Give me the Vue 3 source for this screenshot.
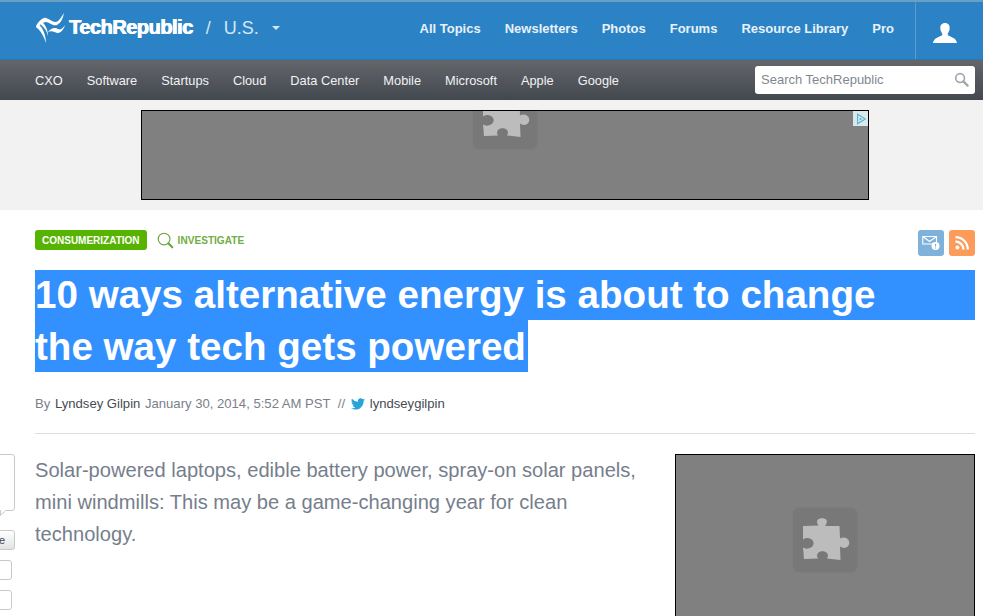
<template>
  <div class="page">
    <!-- top blue bar -->
    <header class="top-bar">
      <div class="brand">
        <svg class="logo-mark" viewBox="0 0 34 32" width="34" height="32">
          <path d="M1 14C4 9 8 5 11 6C15 7 19 12 23 9C25 7.500 27 4 29 1C28 6 26 11 22 13C18 14.500 14 10 11 10C8 10 5 12 2 16Z" fill="#fff"/>
          <path d="M13 20C16 16 20 15 23 17C26 18.500 28 16 30 13C29 17 26 21 23 21C20 21 17 18 13 20Z" fill="#fff"/>
          <path d="M1 15C5 18 9 24 11 31C11 24 8 15 3 12Z" fill="#fff"/>
          <path d="M5 12C9 15 12 19 13 24C13 19 11 13 7 10Z" fill="#fff"/>
        </svg>
        <span class="logo-text">TechRepublic</span>
        <span class="slash">/</span>
        <span class="region">U.S.</span>
        <span class="caret"></span>
      </div>
      <nav class="top-links">
        <a v-for="item in topLinks" :key="item">{{ item }}</a>
      </nav>
      <div class="user-cell">
        <svg viewBox="0 0 24 20" width="24" height="20">
          <path d="M12 0C15.200 0 16.900 2.200 16.700 5.600C16.500 7.800 15.700 9.400 14.800 10.500V12.300C17 13.800 23.300 14.600 24 20H0C.7 14.600 7 13.800 9.200 12.300V10.500C8.300 9.400 7.500 7.800 7.300 5.600C7.100 2.200 8.800 0 12 0Z" fill="#fff"/>
        </svg>
      </div>
    </header>

    <!-- grey section nav -->
    <div class="sub-bar">
      <nav class="sub-links">
        <a v-for="item in subLinks" :key="item">{{ item }}</a>
      </nav>
      <div class="search">
        <span>Search TechRepublic</span>
        <svg viewBox="0 0 16 16" width="15" height="15">
          <circle cx="6.500" cy="6.500" r="4.700" fill="none" stroke="#a3a5a8" stroke-width="1.800"/>
          <path d="M10 10L14.500 14.500" stroke="#a3a5a8" stroke-width="2.400" stroke-linecap="round"/>
        </svg>
      </div>
    </div>

    <!-- ad band -->
    <div class="ad-band">
      <div class="ad-box">
        <div class="plugin-tile clipped">
          <svg viewBox="0 0 64 64" width="64" height="64">
            <path :d="puzzle" fill="#bcbcbc"/>
          </svg>
        </div>
        <div class="ad-choice">
          <svg viewBox="0 0 14 14" width="12" height="12">
            <path d="M3 1.500L12 7L3 12.500Z" fill="none" stroke="#4fb6d2" stroke-width="1.300"/>
            <path d="M5.500 5.500L8.500 7L5.500 8.800Z" fill="#4fb6d2"/>
          </svg>
        </div>
      </div>
    </div>

    <main class="article">
      <div class="tag-row">
        <span class="tag">CONSUMERIZATION</span>
        <svg class="inv-icon" viewBox="0 0 18 18" width="17" height="17">
          <circle cx="7.500" cy="7.500" r="6.200" fill="none" stroke="#6aa53a" stroke-width="1.200"/>
          <path d="M12 12L16.200 16.200" stroke="#6aa53a" stroke-width="2.200" stroke-linecap="round"/>
        </svg>
        <span class="investigate">INVESTIGATE</span>
        <div class="actions">
          <span class="action mail">
            <svg viewBox="0 0 18 16" width="18" height="16">
              <path d="M0.800 1.500H14.500V9H0.800Z M0.800 1.500L7.600 6.500L14.500 1.500" fill="none" stroke="#fff" stroke-width="1.100"/>
              <circle cx="13.500" cy="11" r="4" fill="#fff"/>
              <path d="M13.500 8.700V11.500M13.500 12.400V13.400" stroke="#7fb2da" stroke-width="1.200"/>
            </svg>
          </span>
          <span class="action rss">
            <svg viewBox="0 0 14 14" width="14" height="14">
              <circle cx="2.400" cy="11.600" r="2" fill="#fff"/>
              <path d="M0.500 5.500A8 8 0 0 1 8.500 13.500M0.500 1.200A12.300 12.300 0 0 1 12.800 13.500" fill="none" stroke="#fff" stroke-width="2.300"/>
            </svg>
          </span>
        </div>
      </div>

      <h1 class="headline">
        <span class="hl-line full">10 ways alternative energy is about to change</span>
        <span class="hl-line second">the way tech gets powered</span>
      </h1>

      <div class="byline">
        By <b class="author">Lyndsey Gilpin</b> January 30, 2014, 5:52 AM PST&nbsp; //
        <svg class="bird" viewBox="0 0 24 20" width="14" height="12">
          <path d="M24 2.400a9.800 9.800 0 0 1-2.800.8 4.900 4.900 0 0 0 2.200-2.700 9.800 9.800 0 0 1-3.100 1.200 4.900 4.900 0 0 0-8.400 4.500A14 14 0 0 1 1.700 1a4.900 4.900 0 0 0 1.500 6.600 4.900 4.900 0 0 1-2.200-.6c0 2.400 1.700 4.400 4 4.900a4.900 4.900 0 0 1-2.200.1 4.900 4.900 0 0 0 4.600 3.400A9.900 9.900 0 0 1 0 17.400 14 14 0 0 0 7.500 19.600c9.100 0 14.300-7.700 14-14.600A10 10 0 0 0 24 2.400Z" fill="#2aa3dc"/>
        </svg>
        <b class="handle">lyndseygilpin</b>
      </div>

      <div class="body-row">
        <p class="lead">Solar-powered laptops, edible battery power, spray-on solar panels, mini windmills: This may be a game-changing year for clean technology.</p>
        <div class="image-box">
          <div class="plugin-tile">
            <svg viewBox="0 0 64 64" width="64" height="64">
              <path :d="puzzle" fill="#bcbcbc"/>
            </svg>
          </div>
        </div>
      </div>
    </main>

    <!-- social widgets cut off by the left edge -->
    <div class="share-stack">
      <div class="count-bubble"></div>
      <div class="share-btn">e</div>
      <div class="share-box"></div>
      <div class="share-box"></div>
    </div>
  </div>
</template>

<script setup>
const topLinks = ['All Topics', 'Newsletters', 'Photos', 'Forums', 'Resource Library', 'Pro']
const subLinks = ['CXO', 'Software', 'Startups', 'Cloud', 'Data Center', 'Mobile', 'Microsoft', 'Apple', 'Google']

// puzzle piece used by both blocked plugin tiles
const puzzle = 'M10 18L25.500 17.500C24 15.500 23.500 13.500 24.500 12C26 9.500 32 9.500 33.500 12C34.500 14 33.500 16 32 18L46.500 18L47 30.500C49 29 52 29 54 30.500C57 33 57 37 54 39C52 40.500 49 40 47 38.500L47.500 52L34 50.500C35 49 35.500 47 34 45C32 42.500 27 42.500 25 45C23.500 47 24 49 25 50.500L11 51L10 39.500C12 41 15.500 41 18 39.500C21.500 37.500 21.500 33 18 31C15.500 29.500 12 30 10 31.500Z'
</script>

<style scoped>
.page {
  position: relative;
  width: 983px;
  height: 616px;
  overflow: hidden;
  background: #fff;
  font-family: "Liberation Sans", Arial, sans-serif;
}

/* top bar */
.top-bar {
  height: 60px;
  box-sizing: border-box;
  display: flex;
  align-items: center;
  padding-left: 35px;
  background: #2b83c6;
  border-top: 2px solid #6a9fc4;
  border-bottom: 1px solid #2a76ae;
}
.brand {
  display: flex;
  align-items: center;
  color: #d5e6f4;
  margin-top: -4px;
}
.logo-mark {
  flex: none;
  margin-top: -2px;
}
.logo-text {
  font-size: 20px;
  font-weight: 700;
  letter-spacing: -0.5px;
  color: #fff;
  text-shadow: 0.6px 0 0 #fff, -0.3px 0 0 #fff;
  margin-top: -2px;
}
.slash {
  margin-left: 13px;
  font-size: 18px;
}
.region {
  margin-left: 13px;
  font-size: 18px;
}
.caret {
  margin-left: 13px;
  margin-top: -2px;
  border: 4px solid transparent;
  border-top-color: #d5e6f4;
  border-bottom-width: 0;
}
.top-links {
  margin-left: auto;
  display: flex;
  gap: 24px;
  margin-top: -4px;
  padding-right: 21px;
}
.top-links a {
  font-size: 13px;
  font-weight: 700;
  color: #e8f1f8;
}
.user-cell {
  width: 68px;
  align-self: stretch;
  box-sizing: border-box;
  border-left: 1px solid #5b9ccd;
  padding: 21px 0 0 17px;
}

/* section nav */
.sub-bar {
  height: 40px;
  box-sizing: border-box;
  display: flex;
  align-items: center;
  justify-content: space-between;
  padding: 0 8px 0 35px;
  background: linear-gradient(#63666b, #43484f);
}
.sub-links {
  display: flex;
  gap: 24px;
  padding-top: 1px;
}
.sub-links a {
  font-size: 12.8px;
  color: #f1f2f3;
}
.search {
  width: 220px;
  height: 28px;
  box-sizing: border-box;
  margin-top: -1px;
  padding: 0 6px;
  display: flex;
  align-items: center;
  justify-content: space-between;
  background: #fff;
  border-radius: 3px;
  font-size: 13px;
  color: #83878d;
}

/* ad band */
.ad-band {
  height: 110px;
  padding-top: 10px;
  box-sizing: border-box;
  background: #f2f2f2;
}
.ad-box {
  position: relative;
  width: 728px;
  height: 90px;
  box-sizing: border-box;
  margin-left: 141px;
  background: #808080;
  border: 1px solid #000;
  overflow: hidden;
}
.ad-choice {
  position: absolute;
  top: 0;
  right: 0;
  width: 15px;
  height: 15px;
  display: flex;
  align-items: center;
  justify-content: center;
  background: #dbe8eb;
}
.plugin-tile {
  width: 64px;
  height: 64px;
  background: #787878;
  border-radius: 6px;
  box-shadow: 0 0 2px #7a7a7a;
}
.plugin-tile.clipped {
  position: absolute;
  left: 331px;
  top: -26px;
}

/* article */
.article {
  padding: 20px 8px 0 35px;
}
.tag-row {
  display: flex;
  align-items: center;
  height: 20px;
}
.tag {
  padding: 0 7px;
  height: 20px;
  line-height: 21px;
  box-sizing: border-box;
  background: #56b300;
  border-radius: 3px;
  font-size: 10px;
  font-weight: 700;
  color: #fff;
  white-space: nowrap;
}
.inv-icon {
  margin-left: 10px;
}
.investigate {
  margin-left: 4px;
  font-size: 10.100px;
  font-weight: 700;
  color: #72ad45;
}
.actions {
  margin-left: auto;
  display: flex;
  gap: 5px;
  margin-top: 6px;
}
.action {
  width: 26px;
  height: 26px;
  display: flex;
  align-items: center;
  justify-content: center;
  border-radius: 3px;
}
.mail {
  background: #7fb2da;
}
.rss {
  background: #fd9b5b;
}
.headline {
  margin: 20px 0 0;
  font-size: 38.6px;
  font-weight: 700;
  line-height: 50px;
  color: #fff;
}
.hl-line {
  display: block;
  width: fit-content;
  background: #3390ff;
  white-space: nowrap;
}
.hl-line.full {
  width: auto;
}
.hl-line.second {
  padding: 2px 2px 0 0;
}
.byline {
  margin-top: 24px;
  font-size: 13.1px;
  line-height: 16px;
  color: #7a808a;
  padding-bottom: 21px;
  border-bottom: 1px solid #dcdcdc;
}
.byline b {
  font-weight: 400;
  color: #464b52;
}
.author {
  margin: 0 1px;
}
.bird {
  margin: 0 5px 0 2px;
  vertical-align: -2px;
}
.body-row {
  display: flex;
  justify-content: space-between;
  margin-top: 20px;
}
.lead {
  width: 610px;
  margin: 0;
  font-size: 20.1px;
  line-height: 32px;
  color: #767e8c;
}
.image-box {
  width: 300px;
  height: 250px;
  box-sizing: border-box;
  padding-top: 53px;
  background: #808080;
  border: 1px solid #000;
  display: flex;
  justify-content: center;
}

/* left edge widgets */
.share-stack {
  position: absolute;
  left: -30px;
  top: 454px;
  width: 45px;
}
.count-bubble {
  position: relative;
  height: 57px;
  box-sizing: border-box;
  border: 1px solid #c9c9c9;
  border-radius: 3px;
  background: #fff;
}
.count-bubble::after {
  content: "";
  position: absolute;
  left: 29px;
  bottom: -4px;
  width: 4px;
  height: 4px;
  border-left: 1px solid #c9c9c9;
  border-bottom: 1px solid #c9c9c9;
  background: #fff;
  transform: skewY(-40deg);
}
.share-btn {
  margin-top: 19px;
  height: 20px;
  box-sizing: border-box;
  line-height: 18px;
  text-align: right;
  padding-right: 9px;
  border: 1px solid #c9c9c9;
  border-radius: 3px;
  background: linear-gradient(#fff, #e3e3e3);
  font-size: 11px;
  color: #444;
}
.share-box {
  margin-top: 10px;
  width: 42px;
  height: 20px;
  box-sizing: border-box;
  border: 1px solid #c9c9c9;
  border-radius: 3px;
}
</style>
